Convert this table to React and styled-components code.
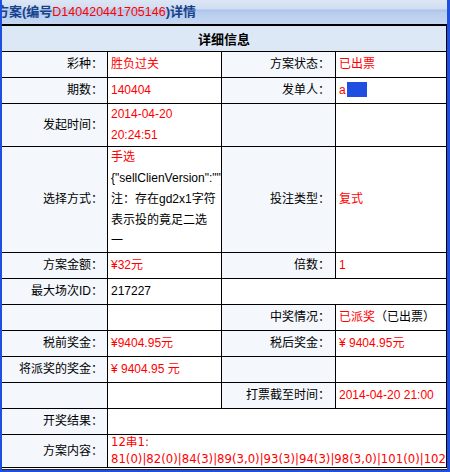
import React from "react";
import styled, { createGlobalStyle } from "styled-components";

const GlobalStyle = createGlobalStyle`
  html, body {
    margin: 0;
    padding: 0;
    background: #fff;
  }
  body {
    width: 450px;
    height: 472px;
    overflow: hidden;
    font-family: "Liberation Sans", "Noto Sans CJK SC", sans-serif;
  }
`;

const Window = styled.div`
  width: 450px;
  height: 472px;
  box-sizing: border-box;
  border-style: solid;
  border-color: #1f4fe0;
  border-width: 0 3px 2px 2px;
  display: flex;
  flex-direction: column;
  overflow: hidden;
  background: #f4f8fd;
`;

const TitleBar = styled.div`
  flex: none;
  height: 24px;
  line-height: 24px;
  white-space: nowrap;
  background: linear-gradient(
    to bottom,
    #dce6f5 0,
    #d0ddf1 9px,
    #a9c2e8 10px,
    #b7cced 12px,
    #c6d7f1 24px
  );
  font-size: 13px;
  font-weight: bold;
  color: #15428b;
`;

const TitleText = styled.span`
  display: inline-block;
  margin-left: -6px;
`;

const TitleNo = styled.span`
  color: #ff0000;
  font-weight: normal;
  font-size: 12.5px;
`;

const Sheet = styled.div`
  flex: none;
  display: grid;
  grid-template-columns: 105px 113px 113px 110px;
  grid-template-rows: 25px 25px 25px 42px 105px repeat(7, 25px) 32px;
  gap: 1px;
  padding: 2px 1px 1px 0;
  background: #000;
  font-size: 12px;
`;

const Header = styled.div`
  grid-column: 1 / -1;
  display: flex;
  align-items: center;
  justify-content: center;
  background: #dde8f7;
  font-size: 13px;
  font-weight: bold;
  color: #000;
`;

const LabelBox = styled.div`
  display: flex;
  align-items: center;
  justify-content: flex-end;
  min-width: 0;
  padding-right: ${(p) => (p.$right ? "5px" : "4px")};
  background: #f4f8fd;
  color: #000;
  line-height: 21px;
  white-space: nowrap;
`;

const ValueBox = styled.div`
  display: flex;
  align-items: center;
  min-width: 0;
  padding: 0 5px 0 3px;
  grid-column: span ${(p) => p.$span || 1};
  background: #fff;
  color: ${(p) => (p.$plain ? "#000" : "#ff0000")};
  line-height: 21px;
`;

const Inner = styled.div`
  min-width: 0;
`;

const Plain = styled.span`
  color: #000;
`;

const NoWrap = styled.span`
  white-space: nowrap;
  color: #000;
`;

const Redact = styled.span`
  display: inline-block;
  width: 20px;
  height: 15px;
  margin-left: 1px;
  vertical-align: -3px;
  background: #1f4fe0;
`;

const Content = styled.div`
  font-family: "DejaVu Sans", "Noto Sans CJK SC", sans-serif;
  font-size: 11.7px;
  line-height: 17px;
  white-space: nowrap;
`;

const Footer = styled.div`
  flex: none;
  height: 2px;
  box-sizing: border-box;
  border-bottom: 1px solid #2a2a2a;
`;

const Label = ({ children, right }) => (
  <LabelBox $right={right}>{children}</LabelBox>
);

const Value = ({ children, span, plain }) => (
  <ValueBox $span={span} $plain={plain}>
    <Inner>{children}</Inner>
  </ValueBox>
);

const App = () => {
  return (
    <>
      <GlobalStyle />
      <Window>
        <TitleBar>
          <TitleText>
            方案(编号<TitleNo>D140420441705146</TitleNo>)详情
          </TitleText>
        </TitleBar>
        <Sheet>
          <Header>详细信息</Header>

          <Label>彩种：</Label>
          <Value>胜负过关</Value>
          <Label right>方案状态：</Label>
          <Value>已出票</Value>

          <Label>期数：</Label>
          <Value>140404</Value>
          <Label right>发单人：</Label>
          <Value>
            a<Redact />
          </Value>

          <Label>发起时间：</Label>
          <Value>2014-04-20 20:24:51</Value>
          <Label right />
          <Value />

          <Label>选择方式：</Label>
          <Value>
            手选
            <br />
            <NoWrap>{'{"sellClienVersion":""}'}</NoWrap>
            <br />
            <Plain>
              注：存在gd2x1字符
              <br />
              表示投的竟足二选
              <br />一
            </Plain>
          </Value>
          <Label right>投注类型：</Label>
          <Value>复式</Value>

          <Label>方案金额：</Label>
          <Value>¥32元</Value>
          <Label right>倍数：</Label>
          <Value>1</Value>

          <Label>最大场次ID：</Label>
          <Value plain>217227</Value>
          <Value span={2} />

          <Label />
          <Value />
          <Label right>中奖情况：</Label>
          <Value>
            已派奖<Plain>（已出票）</Plain>
          </Value>

          <Label>税前奖金：</Label>
          <Value>¥9404.95元</Value>
          <Label right>税后奖金：</Label>
          <Value>¥ 9404.95元</Value>

          <Label>将派奖的奖金：</Label>
          <Value>¥ 9404.95 元</Value>
          <Label right />
          <Value />

          <Label />
          <Value />
          <Label right>打票截至时间：</Label>
          <Value>2014-04-20 21:00</Value>

          <Label>开奖结果：</Label>
          <Value span={3} />

          <Label>方案内容：</Label>
          <Value span={3}>
            <Content>
              12串1:
              <br />
              81(0)|82(0)|84(3)|89(3,0)|93(3)|94(3)|98(3,0)|101(0)|102(3)|105(0)|108(3,0)
            </Content>
          </Value>
        </Sheet>
        <Footer />
      </Window>
    </>
  );
};

export default App;
